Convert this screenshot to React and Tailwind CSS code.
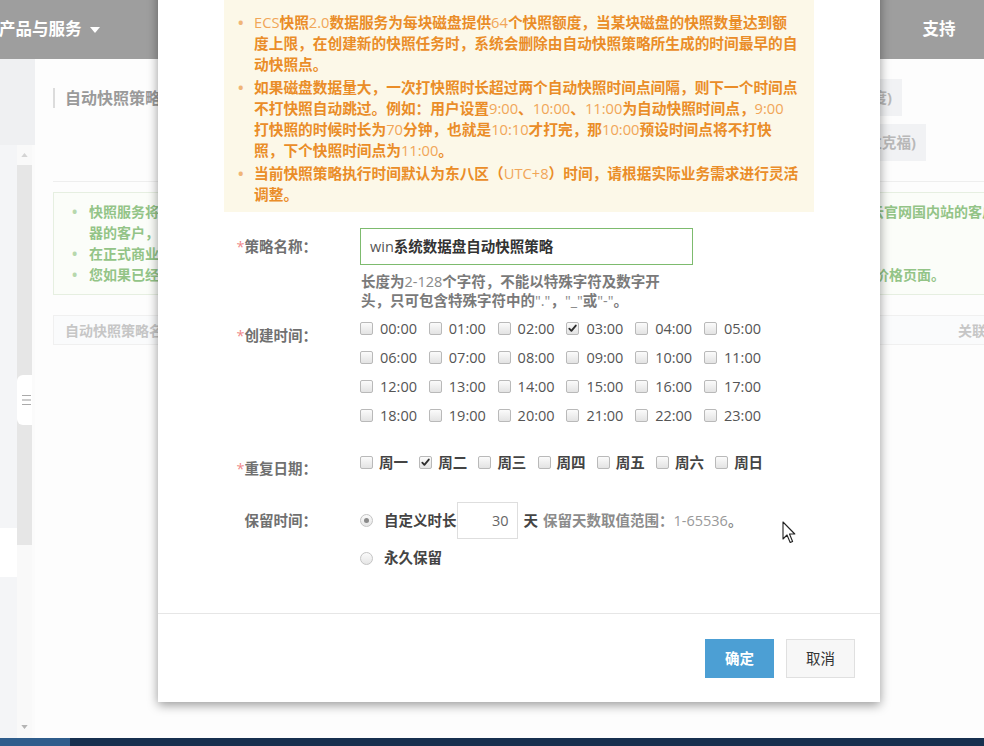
import React from 'react';

const FONT = "font-['Open_Sans','Noto_Sans_CJK_SC',sans-serif]";

// latin runs render lighter / regular weight, CJK stays bold like the original
const Mix = ({ text, latin }) =>
    text.split(/([\x20-\x7E]+)/).map((part, i) =>
        /^[\x20-\x7E]+$/.test(part) ? (
            <span key={i} className={`font-normal ${latin}`}>{part}</span>
        ) : (
            <React.Fragment key={i}>{part}</React.Fragment>
        )
    );

const warnings = [
    [
        'ECS快照2.0数据服务为每块磁盘提供64个快照额度，当某块磁盘的快照数量达到额',
        '度上限，在创建新的快照任务时，系统会删除由自动快照策略所生成的时间最早的自',
        '动快照点。',
    ],
    [
        '如果磁盘数据量大，一次打快照时长超过两个自动快照时间点间隔，则下一个时间点',
        '不打快照自动跳过。例如：用户设置9:00、10:00、11:00为自动快照时间点，9:00',
        '打快照的时候时长为70分钟，也就是10:10才打完，那10:00预设时间点将不打快',
        '照，下个快照时间点为11:00。',
    ],
    [
        '当前快照策略执行时间默认为东八区（UTC+8）时间，请根据实际业务需求进行灵活',
        '调整。',
    ],
];

const hours = Array.from({ length: 24 }, (_, i) => `${String(i).padStart(2, '0')}:00`);
const days = ['周一', '周二', '周三', '周四', '周五', '周六', '周日'];

const Checkbox = ({ checked }) => (
    <span className="w-[13px] h-[13px] shrink-0 border border-[#b9b9b9] rounded-[2px] bg-gradient-to-b from-[#fbfbfb] to-[#e3e3e3] flex items-center justify-center">
        {checked && (
            <svg viewBox="0 0 12 12" className="w-[11px] h-[11px]">
                <path d="M2.5 6.2 L4.8 8.6 L9.6 2.8" fill="none" stroke="#2d2d2d" strokeWidth="2" strokeLinecap="round" strokeLinejoin="round" />
            </svg>
        )}
    </span>
);

const Radio = ({ checked }) => (
    <span className="w-[13px] h-[13px] shrink-0 rounded-full border border-[#c4c4c4] bg-gradient-to-b from-[#fafafa] to-[#e6e6e6] flex items-center justify-center">
        {checked && <span className="w-[5px] h-[5px] rounded-full bg-[#8a8a8a]"></span>}
    </span>
);

const Label = ({ required, children, className = '' }) => (
    <div className={`w-[96px] shrink-0 text-right pr-[3px] font-bold text-[#707070] leading-[20px] ${className}`}>
        {required && <span className="text-[#f08a8a] font-normal">*</span>}
        {children}
    </div>
);

const App = () => {
    return (
        <div className={`relative w-[984px] h-[746px] overflow-hidden bg-[#fdfdfd] text-[14.5px] ${FONT}`}>
            {/* page behind the dialog, washed out by the backdrop */}
            <div className="flex flex-col h-[738px]">
                <div className="h-[59px] shrink-0 bg-[#9e9e9e] flex items-center text-white font-bold text-[16.5px]">
                    <div className="flex items-center gap-[8px] -ml-[1px]">
                        产品与服务
                        <svg viewBox="0 0 10 6" className="w-[10px] h-[6px]"><path d="M0 0 L10 0 L5 6 Z" fill="#fff" /></svg>
                    </div>
                    <div className="ml-auto w-[90px] text-center">支持</div>
                </div>

                <div className="flex flex-1 min-h-0">
                    {/* left sidebar */}
                    <div className="w-[35px] shrink-0 flex flex-col">
                        <div className="h-[86px] bg-[#eff0f2]"></div>
                        <div className="flex flex-1">
                            <div className="w-[17px] bg-[#f4f5f7] flex flex-col">
                                <div className="h-[383px]"></div>
                                <div className="h-[49px] bg-white"></div>
                            </div>
                            <div className="w-[15px] flex flex-col items-center bg-[#f9f9f9]">
                                <svg viewBox="0 0 8 5" className="w-[7px] h-[4px] mt-[8px]"><path d="M0 5 L4 0 L8 5 Z" fill="#d4d4d4" /></svg>
                                <div className="w-full h-[380px] mt-[8px] bg-[#e6e6e6] flex flex-col">
                                    <div className="h-[210px]"></div>
                                    <div className="h-[50px] w-[16px] bg-white rounded-l-[6px] flex flex-col items-center justify-center gap-[3px] pl-[2px]">
                                        <span className="w-[9px] h-[1.5px] bg-[#aaa]"></span>
                                        <span className="w-[9px] h-[1.5px] bg-[#ccc]"></span>
                                        <span className="w-[9px] h-[1.5px] bg-[#aaa]"></span>
                                    </div>
                                </div>
                                <svg viewBox="0 0 8 5" className="w-[7px] h-[4px] mt-auto mb-[9px]"><path d="M0 0 L8 0 L4 5 Z" fill="#b5b5b5" /></svg>
                            </div>
                            <div className="w-[3px] bg-[#fbfbfb]"></div>
                        </div>
                    </div>

                    {/* main content */}
                    <div className="flex-1 pl-[18px] flex flex-col">
                        <div className="h-[123px] flex justify-between border-b border-[#eeeeee]">
                            <div className="mt-[29px] flex items-center gap-[10px] h-[20px]">
                                <span className="w-[2px] h-[20px] bg-[#dcdcdc]"></span>
                                <span className="font-bold text-[16px] text-[#9a9a9a] whitespace-nowrap">自动快照策略</span>
                            </div>
                            <div className="mt-[20px] flex flex-col items-end gap-[8px]">
                                <span className="mr-[82px] h-[37px] px-[10px] bg-[#f1f2f4] text-[#b8b8b8] font-bold flex items-center whitespace-nowrap">按量付费（按年度)</span>
                                <span className="mr-[58px] h-[37px] px-[10px] bg-[#f1f2f4] text-[#b8b8b8] font-bold flex items-center whitespace-nowrap">欧洲中部1（法兰克福)</span>
                            </div>
                        </div>

                        <div className="mt-[10px] h-[103px] border border-r-0 border-[#e6efe1] bg-[#fbfdf9] pt-[8px] pl-[18px] text-[#93c487] font-bold text-[14px] leading-[21px]">
                            <div className="flex">
                                <span className="w-[17px] text-[#b7d8ad]">•</span>
                                <span className="whitespace-nowrap">快照服务将于近期正式商业化收费</span>
                                <span className="ml-auto whitespace-nowrap -mr-[12px]">云官网国内站的客户</span>
                            </div>
                            <div className="pl-[17px]">器的客户，</div>
                            <div className="flex">
                                <span className="w-[17px] text-[#b7d8ad]">•</span>
                                <span className="whitespace-nowrap">在正式商业化之前</span>
                            </div>
                            <div className="flex">
                                <span className="w-[17px] text-[#b7d8ad]">•</span>
                                <span className="whitespace-nowrap">您如果已经开通快照服务</span>
                                <span className="ml-auto whitespace-nowrap mr-[39px]">价格页面。</span>
                            </div>
                        </div>

                        <div className="mt-[20px] h-[30px] border border-r-0 border-[#f0f0f0] bg-[#fafbfc] flex items-center pl-[11px] text-[#c6c6c6] font-bold text-[14px]">
                            <span>自动快照策略名</span>
                            <span className="ml-auto -mr-[2px]">关联</span>
                        </div>
                    </div>
                </div>
            </div>

            {/* taskbar strip */}
            <div className="h-[8px] flex">
                <div className="w-[70px] bg-[#2f5d8c]"></div>
                <div className="flex-1 bg-[#17304f]"></div>
            </div>

            {/* dialog */}
            <div className="absolute left-[158px] top-[-40px] w-[722px] h-[742px] bg-white shadow-[0_3px_10px_rgba(0,0,0,0.4)] flex flex-col">
                <div className="flex-1 px-[66px] pt-[36px]">
                    <div className="bg-[#fcf8e8] pt-[16px] pb-[5px] pl-[14px] text-[#ea8d28] font-bold text-[14.7px] leading-[21px]">
                        {warnings.map((lines, i) => (
                            <div key={i} className="flex mb-[2px]">
                                <span className="w-[16px] shrink-0 text-[#f0b577]">•</span>
                                <div>
                                    {lines.map((line, j) => (
                                        <div key={j} className="whitespace-nowrap">
                                            <Mix text={line} latin="text-[#f1a658]" />
                                        </div>
                                    ))}
                                </div>
                            </div>
                        ))}
                    </div>

                    {/* 策略名称 */}
                    <div className="flex items-center mt-[16px]">
                        <Label required>策略名称：</Label>
                        <div className="ml-[40px] w-[333px] h-[37px] border border-[#7dbb6e] flex items-center pl-[9px] text-[#333] font-bold">
                            <Mix text="win系统数据盘自动快照策略" latin="text-[#555]" />
                        </div>
                    </div>
                    <div className="ml-[137px] mt-[7px] text-[#7a7a7a] font-bold leading-[19px]">
                        <div className="whitespace-nowrap"><Mix text="长度为2-128个字符，不能以特殊字符及数字开" latin="text-[#8a8a8a]" /></div>
                        <div className="whitespace-nowrap"><Mix text={'头，只可包含特殊字符中的"."，"_"或"-"。'} latin="text-[#8a8a8a]" /></div>
                    </div>

                    {/* 创建时间 */}
                    <div className="flex items-start mt-[4px]">
                        <Label required className="pt-[12px]">创建时间：</Label>
                        <div className="ml-[40px] grid grid-cols-[repeat(6,68.8px)]">
                            {hours.map((h) => (
                                <label key={h} className="h-[29px] flex items-center gap-[7px] text-[#555]">
                                    <Checkbox checked={h === '03:00'} />
                                    <span>{h}</span>
                                </label>
                            ))}
                        </div>
                    </div>

                    {/* 重复日期 */}
                    <div className="flex items-start mt-[18px]">
                        <Label required className="pt-[11px]">重复日期：</Label>
                        <div className="ml-[40px] grid grid-cols-[repeat(7,59.2px)]">
                            {days.map((d) => (
                                <label key={d} className="h-[29px] flex items-center gap-[6px] text-[#444] font-bold">
                                    <Checkbox checked={d === '周二'} />
                                    <span>{d}</span>
                                </label>
                            ))}
                        </div>
                    </div>

                    {/* 保留时间 */}
                    <div className="flex items-center mt-[23px]">
                        <Label>保留时间：</Label>
                        <div className="ml-[40px] flex items-center">
                            <Radio checked />
                            <span className="ml-[11px] font-bold text-[#444]">自定义时长</span>
                            <div className="w-[61px] h-[37px] border border-[#dedede] flex items-center justify-end pr-[8px] text-[#666]">30</div>
                            <span className="ml-[6px] font-bold text-[#444]">天</span>
                            <span className="ml-[5px] font-bold text-[#8c8c8c]"><Mix text="保留天数取值范围：1-65536。" latin="text-[#999]" /></span>
                        </div>
                    </div>
                    <div className="flex items-center mt-[9px] h-[20px]">
                        <div className="w-[96px]"></div>
                        <div className="ml-[40px] flex items-center">
                            <Radio />
                            <span className="ml-[11px] font-bold text-[#444]">永久保留</span>
                        </div>
                    </div>
                </div>

                <div className="border-t border-[#e6e6e6] pt-[25px] pb-[24px] pr-[25px] flex justify-end gap-[12px]">
                    <button className="w-[69px] h-[39px] bg-[#4c9fd4] text-white font-bold">确定</button>
                    <button className="w-[69px] h-[39px] bg-[#f7f7f7] border border-[#e0e0e0] text-[#333]">取消</button>
                </div>
            </div>

            {/* mouse pointer */}
            <svg viewBox="0 0 14 23" className="absolute left-[782px] top-[521px] w-[14px] h-[23px]">
                <path d="M1 1 L1 18 L5 14 L8.2 21.5 L10.6 20.5 L7.5 13 L12.8 13 Z" fill="#fff" stroke="#222" strokeWidth="1.1" strokeLinejoin="round" />
            </svg>
        </div>
    );
};

export default App;
